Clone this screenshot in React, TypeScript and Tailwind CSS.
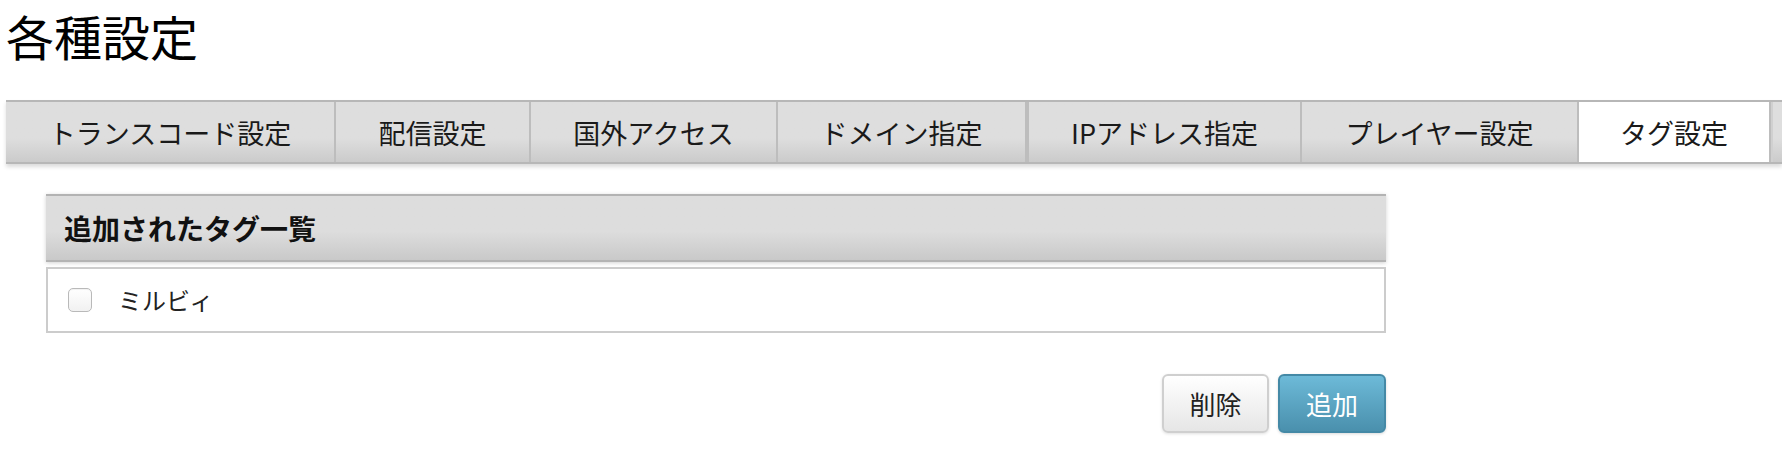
import React from "react";

const tabs = [
  { label: "トランスコード設定", w: "w-[330px]" },
  { label: "配信設定", w: "w-[195px]" },
  { label: "国外アクセス", w: "w-[247px]" },
  { label: "ドメイン指定", w: "w-[249px]" },
  { label: "IPアドレス指定", w: "w-[275px]" },
  { label: "プレイヤー設定", w: "w-[277px]" },
  { label: "タグ設定", w: "w-[192px]", active: true },
];

export default function App() {
  return (
    <div className="min-h-[452px] bg-white text-[#222] font-['Noto_Sans_CJK_JP','Noto_Sans',sans-serif]">
      <h1 className="pt-[11px] pl-[6px] text-[48px] leading-[48px] font-normal text-black">各種設定</h1>

      {/* settings tabs */}
      <div className="mt-[41px] ml-[6px] h-[64px] flex overflow-hidden border-y-2 border-[#b7b7b7] bg-gradient-to-b from-[#dedede] from-60% to-[#cbcbcb] shadow-[0_3px_4px_rgba(0,0,0,0.14)]">
        {tabs.map((t, i) => (
          <div
            key={t.label}
            className={`${t.w} shrink-0 flex items-center justify-center text-[27px] leading-none border-r-2 border-[#bdbdbd] ${
              i === 4 ? "border-l-2" : ""
            } ${t.active ? "bg-white" : "bg-gradient-to-b from-[#dedede] from-60% to-[#cbcbcb]"} text-[#1a1a1a]`}
          >
            {t.label}
          </div>
        ))}
        <div className="flex-1 border-l-2 border-[#d0d0d0]" />
      </div>

      {/* tag list panel */}
      <div className="ml-[46px] mt-[30px] w-[1340px]">
        <div className="h-[68px] flex items-center pl-[18px] border-y-2 border-[#b3b3b3] bg-gradient-to-b from-[#dddddd] from-55% to-[#c9c9c9] shadow-[0_1px_4px_rgba(0,0,0,0.18)]">
          <span className="text-[28px] font-bold leading-none text-[#111]">追加されたタグ一覧</span>
        </div>
        <div className="mt-[5px] h-[66px] border-2 border-[#cccccc] flex items-center pl-[20px]">
          <span className="w-[24px] h-[24px] rounded-[5px] border border-[#b9b9b9] bg-gradient-to-b from-white to-[#f1f1f1] shadow-[inset_0_1px_1px_rgba(0,0,0,0.06)]" />
          <span className="ml-[26px] text-[24px] leading-none text-[#222]">ミルビィ</span>
        </div>

        <div className="mt-[41px] flex justify-end gap-[9px]">
          <button className="w-[107px] h-[59px] rounded-[6px] border-2 border-[#cfcfcf] bg-gradient-to-b from-white to-[#e6e6e6] text-[26px] leading-none text-[#222] shadow-[0_1px_3px_rgba(0,0,0,0.12)]">
            削除
          </button>
          <button className="w-[108px] h-[59px] rounded-[6px] border-2 border-[#4489a6] bg-gradient-to-b from-[#6dbad8] to-[#4a90ad] text-[26px] leading-none text-white shadow-[0_1px_3px_rgba(0,0,0,0.15)]">
            追加
          </button>
        </div>
      </div>
    </div>
  );
}
